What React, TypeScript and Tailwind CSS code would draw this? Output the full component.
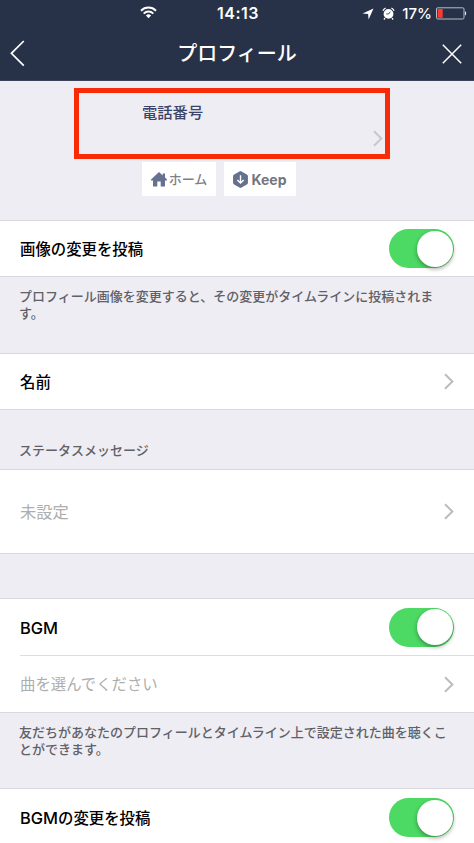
import { ReactNode } from "react";

interface RowProps {
  label: ReactNode;
  muted?: boolean;
  className?: string;
  children?: ReactNode;
}

function Chevron({ className = "" }: { className?: string }) {
  return (
    <svg
      className={`w-[10px] h-[17px] shrink-0 ${className}`}
      viewBox="0 0 10 17"
      fill="none"
      stroke="currentColor"
      strokeWidth="2"
    >
      <path d="M1 1.2 8.4 8.5 1 15.8" />
    </svg>
  );
}

function Toggle() {
  return (
    <div className="w-[65px] h-[39px] shrink-0 rounded-full bg-[#4cd964] flex items-center justify-end pr-[1.5px]">
      <div className="w-[36px] h-[36px] rounded-full bg-white shadow-[0_2px_4px_rgba(0,0,0,0.35)]" />
    </div>
  );
}

function Row({ label, muted, className = "", children }: RowProps) {
  return (
    <div className={`flex items-center justify-between pl-[20px] pr-[20px] ${className}`}>
      <span
        className={
          muted ? "pt-[2px] text-[#aeaeae] font-normal" : "pt-[2px] text-black font-medium"
        }
      >
        {label}
      </span>
      {children}
    </div>
  );
}

function StatusBar() {
  return (
    <div className="relative h-[27px] flex items-center justify-end pr-[7px]">
      <svg className="absolute left-[140px] top-[6px] w-[17px] h-[13px]" viewBox="0 0 17 13" fill="none" stroke="white" strokeWidth="2">
        <path d="M1 4.7a10.6 10.6 0 0 1 15 0" />
        <path d="M3.7 7.6a6.8 6.8 0 0 1 9.6 0" />
        <path d="M8.5 12.2 5.9 9.6a3.7 3.7 0 0 1 5.2 0z" fill="white" stroke="none" />
      </svg>
      <span className="absolute left-[217px] top-[3px] text-[16px] leading-[20px] font-semibold tracking-[0.5px]">
        14:13
      </span>
      <svg className="w-[12px] h-[12px] mr-[8px]" viewBox="0 0 12 12" fill="white">
        <path d="M11.5.5 6.6 11.5 6.1 6.1.5 5.6z" />
      </svg>
      <svg className="w-[13px] h-[13px] mr-[7px]" viewBox="0 0 13 13" fill="none">
        <circle cx="6.5" cy="6.9" r="4.9" fill="white" />
        <path d="M.9 3.7A6.8 6.8 0 0 1 3.6 1M12.1 3.7A6.8 6.8 0 0 0 9.4 1M3 11.2 1.9 12.5M10 11.2l1.1 1.3" stroke="white" strokeWidth="1.3" />
        <path d="M8.3 4.7 6.5 7H4.4" stroke="#273148" strokeWidth=".9" />
      </svg>
      <span className="text-[15px] leading-[20px] mr-[4px] font-medium">17%</span>
      <svg className="w-[31px] h-[13px]" viewBox="0 0 31 13" fill="none">
        <rect x=".5" y=".8" width="27.5" height="11.2" rx="1.2" stroke="#b9bdc6" />
        <rect x="1.7" y="2" width="5" height="8.8" fill="#fb3b30" />
        <path d="M29 4.3c1.6.3 1.6 3.9 0 4.2z" fill="#e4e6ea" />
      </svg>
    </div>
  );
}

function Header() {
  return (
    <header className="h-[81px] bg-[#273148] border-b border-[#3c425a] text-white">
      <StatusBar />
      <div className="h-[53px] flex items-center justify-between pl-[10px] pr-[12px]">
        <svg className="w-[15px] h-[27px]" viewBox="0 0 15 27" fill="none" stroke="white" strokeWidth="1.7">
          <path d="M13.8 1 1.4 13.3l12.4 12.4" />
        </svg>
        <h1 className="text-[20px] leading-[28px] font-medium ml-[7px] pt-[1px]">プロフィール</h1>
        <svg className="w-[20px] h-[20px]" viewBox="0 0 20 20" fill="none" stroke="white" strokeWidth="1.5">
          <path d="M.8.8l18.4 18.4M19.2.8.8 19.2" />
        </svg>
      </div>
    </header>
  );
}

function ProfileTop() {
  return (
    <section className="h-[139px] pt-[7px] pl-[74px]">
      <div className="w-[316px] h-[71px] border-[5.5px] border-[#f92a08] flex justify-between pl-[63px] pr-[2px]">
        <span className="mt-[9px] text-[15.3px] leading-[22px] font-medium text-[#3a4468]">
          電話番号
        </span>
        <Chevron className="mt-[37px] text-[#c7c7cc]" />
      </div>
      <div className="flex gap-[8px] mt-[3px] ml-[68px]">
        <button className="w-[74px] h-[34px] bg-white flex items-center justify-center text-[13px] font-medium text-[#7f8087]">
          <svg className="w-[16px] h-[15px] mr-[2px]" viewBox="0 0 16 15" fill="#66708f">
            <path d="M8 0 0 7.4v1.1h2V14.5h4.3V9.6h3.4v4.9H14V8.5h2V7.4l-2-1.9V1.4h-2.3v2z" />
          </svg>
          <span className="pt-[1px]">ホーム</span>
        </button>
        <button className="w-[72px] h-[34px] bg-white flex items-center justify-center text-[14px] font-bold text-[#74767e]">
          <svg className="w-[15px] h-[17px] mr-[3px]" viewBox="0 0 14 16" fill="#66708f">
            <path d="M6 .4q1-.6 2 0l5 2.9q1 .6 1 1.6v6.2q0 1-1 1.6l-5 2.9q-1 .6-2 0l-5-2.9q-1-.6-1-1.6V4.9q0-1 1-1.6z" />
            <path d="M7 4v7.2M4 8.4l3 3 3-3" fill="none" stroke="white" strokeWidth="1.3" />
          </svg>
          <span className="pt-[1px]">Keep</span>
        </button>
      </div>
    </section>
  );
}

export default function App() {
  return (
    <div className="w-[474px] h-[843px] overflow-hidden bg-[#eeedf3] text-[15.4px] font-[Inter,'Noto_Sans_CJK_JP',sans-serif]">
      <Header />
      <ProfileTop />

      {/* 画像の変更 */}
      <Row label="画像の変更を投稿" className="h-[57px] bg-white border-y border-[#d9d8de]">
        <Toggle />
      </Row>
      <p className="h-[76px] pt-[11px] pl-[19px] text-[13px] leading-[16.5px] font-medium text-[#606066]">
        プロフィール画像を変更すると、その変更がタイムラインに投稿されま
        <br />
        す。
      </p>

      {/* 名前 */}
      <Row label="名前" className="h-[57px] bg-white border-y border-[#d9d8de]">
        <Chevron className="text-[#bcbcc0]" />
      </Row>

      {/* ステータスメッセージ */}
      <h2 className="h-[59px] pt-[32px] pl-[19px] text-[13px] leading-[17px] font-medium text-[#606066]">
        ステータスメッセージ
      </h2>
      <Row label="未設定" muted className="h-[85px] bg-white border-y border-[#d9d8de] text-[16.3px]">
        <Chevron className="text-[#bcbcc0]" />
      </Row>

      {/* BGM */}
      <div className="mt-[44px] bg-white border-y border-[#d9d8de]">
        <Row label={<span className="text-[16.4px]">BGM</span>} className="h-[56px]">
          <Toggle />
        </Row>
        <div className="ml-[20px] h-px bg-[#dddde0]" />
        <Row label="曲を選んでください" muted className="h-[56px]">
          <Chevron className="text-[#bcbcc0]" />
        </Row>
      </div>
      <p className="h-[75px] pt-[11px] pl-[19px] text-[13px] leading-[16.5px] font-medium text-[#606066]">
        友だちがあなたのプロフィールとタイムライン上で設定された曲を聴くこ
        <br />
        とができます。
      </p>
      <Row
        label={
          <>
            <span className="text-[16.4px]">BGM</span>の変更を投稿
          </>
        }
        className="h-[58px] bg-white border-t border-[#d9d8de]"
      >
        <Toggle />
      </Row>
    </div>
  );
}
